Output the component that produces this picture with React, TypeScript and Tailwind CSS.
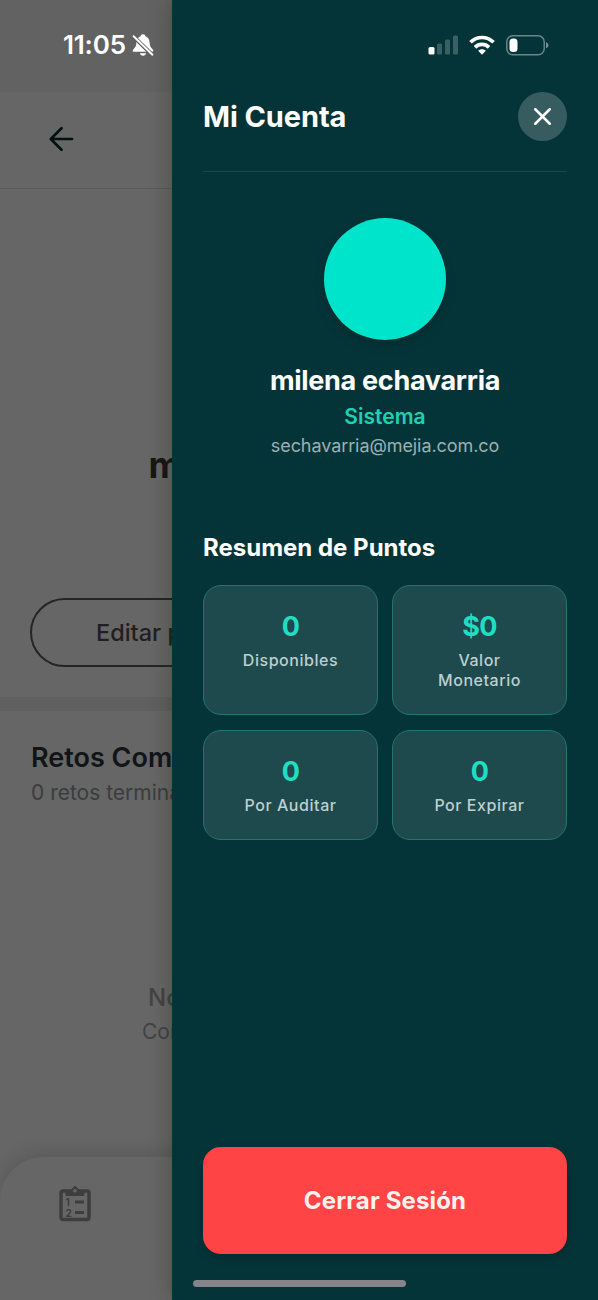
import React from 'react';
import { X } from 'lucide-react';

interface Stat {
    value: string;
    label: string;
}

const stats: Stat[] = [
    { value: '0', label: 'Disponibles' },
    { value: '$0', label: 'Valor Monetario' },
    { value: '0', label: 'Por Auditar' },
    { value: '0', label: 'Por Expirar' },
];

const StatusBar = () => (
    <div className="absolute inset-x-0 top-0 z-30 flex h-[90px] items-center justify-between pl-[63px] pr-[49px] text-white">
        <div className="flex items-center gap-[6px]">
            <span className="text-[26px] font-semibold leading-8 tracking-[-0.2px]">11:05</span>
            <svg width="22" height="24" viewBox="0 0 22 24">
                <path d="M11 1.2c-1.400 0-2.300.9-2.400 2.100C6 4.300 4.500 6.400 4.400 9.200c-.1 3.600-.9 5-2.500 6.500-.9.900-1.200 1.500-1.200 2 0 .7.5 1.100 1.300 1.100h18c.8 0 1.300-.4 1.300-1.100 0-.5-.3-1.100-1.200-2-1.600-1.500-2.400-2.900-2.500-6.500-.1-2.800-1.600-4.900-4.200-5.900-.1-1.200-1-2.100-2.400-2.100z" fill="currentColor" />
                <path d="M7.800 20.300h6.400c-.4 1.500-1.600 2.400-3.200 2.400s-2.800-.9-3.200-2.400z" fill="currentColor" />
                <path d="M1.600 3.600l18.500 18.200" stroke="#606060" strokeWidth="4" />
                <path d="M1.600 3.200l18.800 18.500" stroke="currentColor" strokeWidth="1.900" strokeLinecap="round" />
            </svg>
        </div>
        <div className="flex items-center gap-[11px]">
            <svg width="31" height="20" viewBox="0 0 31 20" fill="currentColor">
                <rect x="1.500" y="12" width="6" height="7.500" rx="1.500" />
                <rect x="10" y="8.500" width="5" height="11" rx="1.500" opacity="0.220" />
                <rect x="18" y="4.500" width="5" height="15" rx="1.500" opacity="0.220" />
                <rect x="26" y="0.500" width="5" height="19" rx="1.500" opacity="0.220" />
            </svg>
            <svg width="26" height="20" viewBox="0 0 26 20" fill="none" stroke="currentColor" strokeWidth="3.700">
                <path d="M1.500 7.300C8 .9 18 .9 24.500 7.300" />
                <path d="M6 12.300c4-3.800 10-3.800 14 0" />
                <path d="M13 19.700l-3.800-3.900c2.200-2 5.400-2 7.600 0z" fill="currentColor" stroke="none" />
            </svg>
            <svg width="43" height="21" viewBox="0 0 43 21" fill="none">
                <rect x="0.800" y="0.800" width="37.400" height="19" rx="6" stroke="white" strokeOpacity="0.400" strokeWidth="1.500" />
                <rect x="3.500" y="3.500" width="8" height="13.600" rx="3.500" fill="white" />
                <path d="M40 7.300c1.600.6 2.400 1.700 2.400 3s-.8 2.400-2.400 3z" fill="white" fillOpacity="0.450" />
            </svg>
        </div>
    </div>
);

const ProfilePage = () => (
    <div className="flex h-full w-full flex-col bg-white">
        <div className="h-[92px] bg-[#f5f5f5]" />
        <header className="flex h-[97px] items-center border-b border-[#e2e2e2] pb-[2px] pl-[49px]">
            <svg width="25" height="26" viewBox="0 0 25 26" fill="none" stroke="#082a30" strokeWidth="2.700" strokeLinecap="round" strokeLinejoin="round">
                <path d="M23 13H2M12.500 2.300L1.800 13l10.700 10.700" />
            </svg>
        </header>

        <section className="flex h-[522px] flex-col items-center border-b-[14px] border-[#eeeeee] pt-[254px]">
            <h2 className="whitespace-nowrap text-[36px] font-bold leading-[44px] tracking-[-0.75px] text-[#3a3a3a]">milena echavarria</h2>
            <div className="mt-[111px] flex h-[69px] w-[538px] items-center rounded-full border-2 border-[#5c5c5c] pl-[64px]">
                <span className="text-[23.5px] font-medium leading-8 text-[#505050]">Editar perfil</span>
            </div>
        </section>

        <section className="h-[446px] pl-[31px] pt-[29px]">
            <h3 className="text-[27px] font-semibold leading-9 text-[#2c353a]">Retos Completados</h3>
            <p className="mt-[3px] text-[21px] leading-7 text-[#92989c]">0 retos terminados</p>
            <div className="pl-[111px] pt-[175px] text-[#a8a8a8]">
                <p className="pl-1.5 text-[24px] font-medium leading-8">No hay retos</p>
                <p className="mt-1 text-[21px] leading-7">Completa retos</p>
            </div>
        </section>

        {/* Bottom tab bar */}
        <nav className="h-[143px] rounded-t-[44px] bg-white pl-[58px] pt-[29px] shadow-[0_-4px_22px_rgba(0,0,0,0.140)]">
            <svg width="34" height="36" viewBox="0 0 34 36" fill="none">
                <rect x="3" y="5" width="28" height="28.500" rx="2" stroke="#9c9c9c" strokeWidth="3.500" />
                <path d="M8 9.500V4.500h4.500L17 0l4.500 4.500H26v5z" fill="#9c9c9c" stroke="#9c9c9c" strokeLinejoin="round" />
                <circle cx="17" cy="4.800" r="1.700" fill="white" />
                <text x="7.500" y="19.500" fontSize="10" fontWeight="700" fill="#9c9c9c">1</text>
                <text x="7.500" y="30.500" fontSize="10" fontWeight="700" fill="#9c9c9c">2</text>
                <path d="M17 16h9M17 26.500h9" stroke="#9c9c9c" strokeWidth="3" />
            </svg>
        </nav>
    </div>
);

const StatCard = ({ value, label }: Stat) => (
    <div className="flex flex-col items-center rounded-[18px] border border-[#237470] bg-[#1f4a4d] px-8 pb-[24px] pt-[23px] text-center">
        <span className="text-[27px] font-bold leading-[36px] tracking-[-0.6px] text-[#1fdfc2]">{value}</span>
        <span className="mt-[5px] text-[16px] font-medium leading-5 tracking-[0.55px] text-[#bdcfd0]">{label}</span>
    </div>
);

const AccountDrawer = () => (
    <aside className="absolute inset-y-0 right-0 z-20 flex w-[426px] flex-col bg-[#053438] px-[31px] pt-[92px] shadow-[0_0_20px_rgba(30,25,0,0.350)]">
        <div className="flex h-[80px] items-start justify-between border-b border-[#1b464a]">
            <h1 className="mt-[6px] text-[29px] font-bold leading-[38px] tracking-[-0.1px] text-white">Mi Cuenta</h1>
            <button className="flex size-[49px] items-center justify-center rounded-full bg-[#375c5f] text-white">
                <X size={29} strokeWidth={2.1} />
            </button>
        </div>

        <div className="mt-[46px] flex flex-col items-center">
            <div className="size-[122px] rounded-full bg-[#00e4cb] shadow-[0_6px_12px_rgba(0,0,0,0.150)]" />
            <h2 className="mt-[23px] text-[27px] font-bold leading-9 tracking-[-0.3px] text-white">milena echavarria</h2>
            <p className="mt-[2px] text-[21px] font-semibold leading-8 text-[#1fd1b2]">Sistema</p>
            <p className="-mt-px text-[18px] leading-7 tracking-[-0.08px] text-[#9bb0b1]">sechavarria@mejia.com.co</p>
        </div>

        <h3 className="mt-[72px] text-[24px] font-bold leading-8 text-white">Resumen de Puntos</h3>
        <div className="mt-[21px] grid grid-cols-2 gap-x-[14px] gap-y-[15px]">
            {stats.map(stat => (
                <StatCard key={stat.label} value={stat.value} label={stat.label} />
            ))}
        </div>

        <button className="mb-[46px] mt-auto h-[107px] shrink-0 rounded-[18px] bg-[#ff4446] text-[24px] font-bold tracking-[0.15px] text-[#fff2ee] shadow-[0_4px_10px_rgba(0,0,0,0.200)]">
            Cerrar Sesión
        </button>
    </aside>
);

const App = () => (
    <div className="relative h-[1300px] w-[598px] overflow-hidden font-[Inter,sans-serif]">
        <ProfilePage />
        <div className="absolute inset-0 z-10 bg-black/60" />
        <AccountDrawer />
        <StatusBar />
        {/* Home indicator */}
        <div className="absolute bottom-[13px] left-[193px] z-30 h-[7px] w-[213px] rounded-full bg-[#858589]" />
    </div>
);

export default App;
